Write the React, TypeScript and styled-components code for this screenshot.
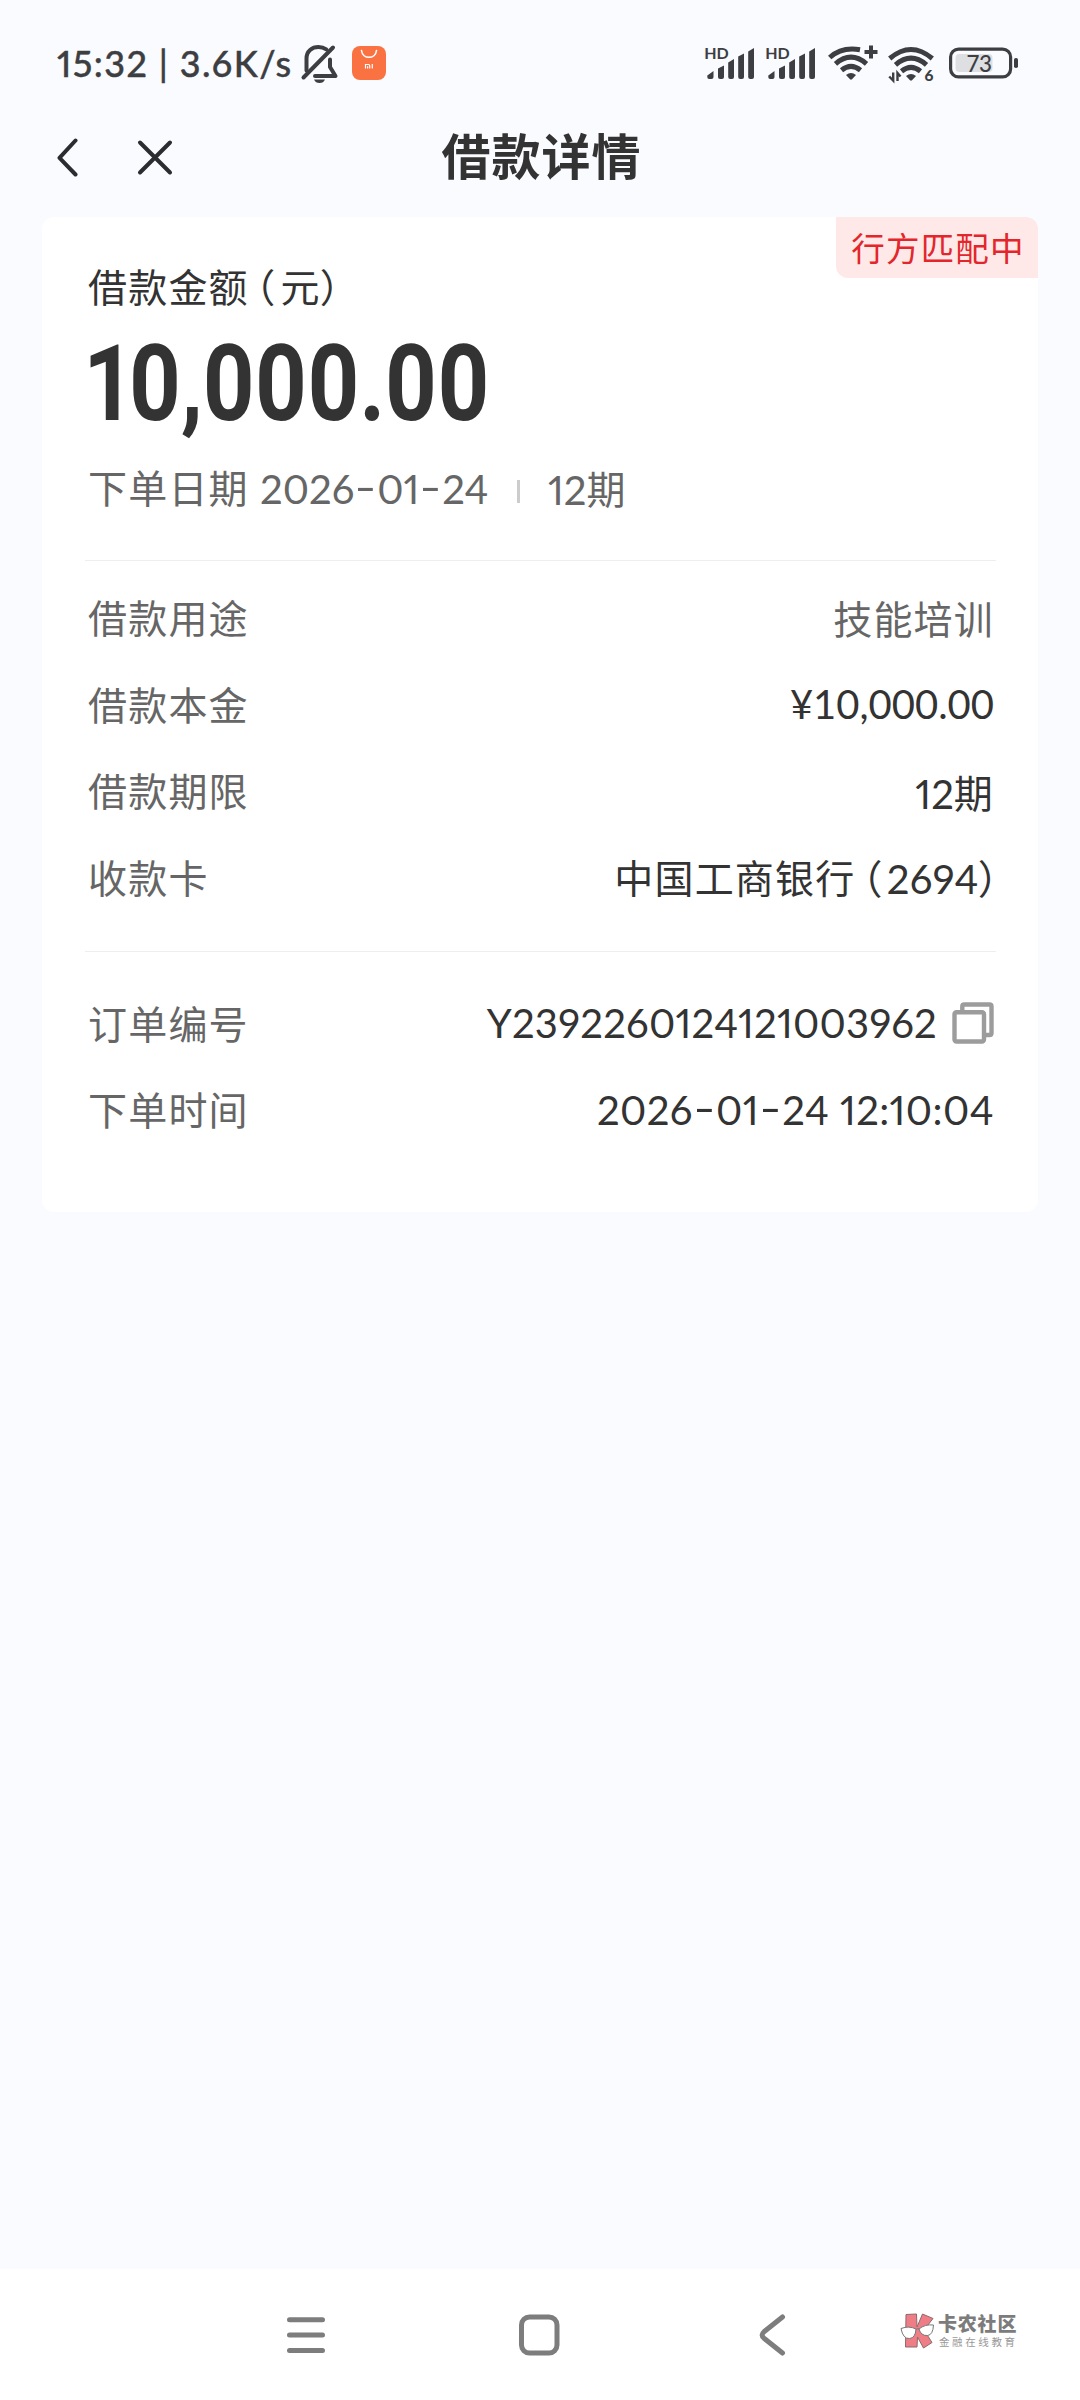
import { FC, Fragment, ReactNode } from 'react';

import styled, { createGlobalStyle } from 'styled-components';

interface DetailRow {
  label: string;
  value: ReactNode;
  muted?: boolean;
  tabular?: boolean;
  spacing?: number;
  copyable?: boolean;
}

const App: FC = () => (
  <Screen>
    <GlobalStyle />
    <StatusBar>
      <StatusGroup>
        <StatusText>15:32 | 3.6K/s</StatusText>
        <MutedBellIcon />
        <StoreIcon />
      </StatusGroup>
      <StatusGroup>
        <SignalIcon />
        <SignalIcon />
        <WifiPlusIcon />
        <WifiSixIcon />
        <BatteryIcon />
      </StatusGroup>
    </StatusBar>

    <Header>
      <HeaderActions>
        <IconButton aria-label="返回">
          <svg width="24" height="40" viewBox="0 0 24 40">
            <path d="M19.500 3.500 3.500 20.800 19.500 37.500" />
          </svg>
        </IconButton>
        <IconButton aria-label="关闭">
          <svg width="38" height="38" viewBox="0 0 38 38">
            <path d="M4 4.500 34 34.500M34 4.500 4 34.500" />
          </svg>
        </IconButton>
      </HeaderActions>
      <Title>借款详情</Title>
    </Header>

    <Card>
      <StatusTag>行方匹配中</StatusTag>
      <AmountLabel>
        借款金额<ParenLeft>（</ParenLeft>元<ParenRight>）</ParenRight>
      </AmountLabel>
      <Amount>10,000.00</Amount>
      <Summary>
        <SummaryLabel>下单日期</SummaryLabel>
        <SummaryDate>
          <DateText text="2026-01-24" />
        </SummaryDate>
        <Separator />
        <span>
          12<Cjk>期</Cjk>
        </span>
      </Summary>

      <Section $top={13}>
        {loanRows.map((row) => (
          <Detail key={row.label} row={row} />
        ))}
      </Section>
      <Section $top={28}>
        {orderRows.map((row) => (
          <Detail key={row.label} row={row} />
        ))}
      </Section>
    </Card>

    <NavBar>
      <NavButton aria-label="菜单">
        <svg width="48" height="48" viewBox="0 0 48 48">
          <path d="M7.500 8.700h33M7.500 24h33M7.500 39.500h33" />
        </svg>
      </NavButton>
      <NavButton aria-label="主页">
        <svg width="48" height="48" viewBox="0 0 48 48">
          <rect x="6.500" y="6" width="35.500" height="36" rx="8" />
        </svg>
      </NavButton>
      <NavButton aria-label="返回">
        <svg width="48" height="48" viewBox="0 0 48 48">
          <path d="M34.500 6 16 20.800q-3.800 3.200 0 6.400L34.500 42" />
        </svg>
      </NavButton>
      <Watermark>
        <WatermarkLogo />
        <WatermarkText>
          <WatermarkName>卡农社区</WatermarkName>
          <WatermarkSlogan>金融在线教育</WatermarkSlogan>
        </WatermarkText>
      </Watermark>
    </NavBar>
  </Screen>
);

export default App;

const Detail: FC<{ row: DetailRow }> = ({ row }) => (
  <Row>
    <Label>{row.label}</Label>
    <ValueGroup>
      <Value $muted={row.muted} $tabular={row.tabular} $spacing={row.spacing}>
        {row.value}
      </Value>
      {row.copyable && <CopyIcon />}
    </ValueGroup>
  </Row>
);

// Dates use wide dashes centred on the figures
const DateText: FC<{ text: string }> = ({ text }) => (
  <>
    {text.split('-').map((part, index) => (
      <Fragment key={index}>
        {index > 0 && <Dash>-</Dash>}
        {part}
      </Fragment>
    ))}
  </>
);

const MutedBellIcon: FC = () => (
  <BellSvg width="38" height="40" viewBox="0 0 38 40">
    <path d="M5.500 26.500V14.500C5.500 7 11 3 17.500 3c3 0 5.500.8 7.800 2.400" />
    <path d="M2.500 33.500 32 3.500" />
    <path d="M29 15.500v7.500l5.500 9H14" />
    <path d="M13 35.500h11q-1.500 3.500-5.500 3.500t-5.500-3.500z" fill="#3d3e42" stroke="none" />
  </BellSvg>
);

const StoreIcon: FC = () => (
  <StoreBadge width="34" height="34" viewBox="0 0 34 34">
    <rect width="34" height="34" rx="8" fill="#fb7242" />
    <path d="M9.500 4.500c1 9 14 9 15 0" fill="none" stroke="#fff" strokeWidth="1.600" strokeLinecap="round" />
    <path
      d="M13.500 22.500v-4h3q1.200 0 1.200 1.200v2.800M15.600 20.200v2.300M20.300 18v4.500"
      fill="none"
      stroke="#fff"
      strokeWidth="1.200"
    />
  </StoreBadge>
);

const SignalIcon: FC = () => (
  <SignalSvg width="50" height="34" viewBox="0 0 50 34">
    <text x="-.8" y="13" fontSize="16" fontWeight="700" fontFamily="Lato, sans-serif">
      HD
    </text>
    <path d="M2.300 29.500 8.500 25v6q0 2-2 2h-2.400q-1.800 0-1.800-2z" />
    <path d="M13 22.500 19 19.500V31q0 2-2 2h-2q-2 0-2-2z" />
    <path d="M23.200 16.500 29 13V31q0 2-2 2h-1.800q-2 0-2-2z" />
    <path d="M33.200 10.500 39 7.500V31q0 2-2 2h-1.800q-2 0-2-2z" />
    <path d="M43.200 5.500 49 2V31q0 2-2 2h-1.800q-2 0-2-2z" />
  </SignalSvg>
);

const WifiArcs: FC<{ outer: string }> = ({ outer }) => (
  <>
    <g fill="none" stroke="#3d3e42" strokeWidth="5">
      <path d={outer} />
      <path d="M7.500 18.800Q23 5.500 38.500 18.800" />
      <path d="M13.500 25.300Q23 17.500 32.500 25.300" />
    </g>
    <path d="M18 30q5-4 10 0l-4 4.300q-1 .9-2 0z" />
  </>
);

const WifiPlusIcon: FC = () => (
  <WifiPlusSvg width="50" height="36" viewBox="0 0 50 36">
    <WifiArcs outer="M1.700 12.500Q14 1.500 32 4.800" />
    <path d="M36.500 7h13M43 .5v13" fill="none" stroke="#3d3e42" strokeWidth="4" />
  </WifiPlusSvg>
);

const WifiSixIcon: FC = () => (
  <WifiSixSvg width="48" height="36" viewBox="0 0 48 36">
    <WifiArcs outer="M1.700 12.500Q23-5.500 44.300 12.500" />
    <path d="M5.200 26.500v8l-4-4M9.500 35v-8l3 3.500" fill="none" stroke="#3d3e42" strokeWidth="2.400" />
    <text x="36.500" y="34.500" fontSize="15.500" fontWeight="900" fontFamily="Lato, sans-serif">
      6
    </text>
  </WifiSixSvg>
);

const BatteryIcon: FC = () => (
  <BatterySvg width="70" height="32" viewBox="0 0 70 32">
    <rect x="1.600" y="2.100" width="60" height="27.800" rx="8" fill="none" stroke="#3d3e42" strokeWidth="3.200" />
    <rect x="6.500" y="7" width="37" height="18" rx="4" fill="#dedfe2" />
    <rect x="65" y="11" width="4" height="10" rx="1.800" />
    <text x="18" y="24.500" fontSize="22.500" fontWeight="500" fontFamily="Lato, sans-serif">
      73
    </text>
  </BatterySvg>
);

const CopyIcon: FC = () => (
  <CopySvg width="42" height="42" viewBox="0 0 42 42">
    <path d="M10.300 9V4.500q0-2 2-2H37.500q2 0 2 2V31q0 2-2 2H34" />
    <rect x="2.500" y="10.200" width="29.500" height="29.300" rx="2" />
  </CopySvg>
);

const WatermarkLogo: FC = () => (
  <svg width="36" height="36" viewBox="0 0 36 36">
    <path
      d="M6 1.500 16.500 1l.5 13L22.500 1 33 5.500 24 17l8 12.500-8.500 5.500-6-11-.5 10H5.500z"
      fill="#ef7d86"
      stroke="#8c6a6c"
      strokeWidth="1"
    />
    <path
      d="M1 15.500q8-3 15 .5-.5 9-6.500 9.500Q3 26 1 15.500zM19 16q6-5 14.500-4-.5 10-6 10.500Q21 23 19 16z"
      fill="#fff"
      stroke="#777"
    />
    <path d="M16 16.500q1.500-1.500 3-.5" fill="none" stroke="#777" />
  </svg>
);

const GlobalStyle = createGlobalStyle`
  body {
    margin: 0;
    background: #fafbff;
  }
`;

const Screen = styled.div`
  display: flex;
  flex-direction: column;
  box-sizing: border-box;
  width: 1080px;
  height: 2400px;
  overflow: hidden;
  background: #fafbff;
  color: #333;
  font-family: 'Lato', 'Noto Sans CJK SC', sans-serif;
  font-size: 40px;
  font-variant-numeric: proportional-nums;
`;

const StatusBar = styled.div`
  display: flex;
  justify-content: space-between;
  align-items: flex-start;
  height: 115px;
  padding: 0 61px 0 55px;
`;

const StatusGroup = styled.div`
  display: flex;
  align-items: flex-start;

  svg {
    flex: none;
    overflow: visible;
    fill: #3d3e42;
  }
`;

const StatusText = styled.span`
  box-sizing: border-box;
  width: 246px;
  margin-top: 39px;
  padding-left: 2px;
  color: #3d3e42;
  font-size: 36px;
  font-weight: 500;
  letter-spacing: 1.4px;
  line-height: 48px;
  white-space: pre;
  -webkit-text-stroke: 0.4px #3d3e42;
`;

const BellSvg = styled.svg`
  margin-top: 44px;

  && {
    fill: none;
  }

  stroke: #3d3e42;
  stroke-width: 4;
  stroke-linecap: round;
  stroke-linejoin: round;
`;

const StoreBadge = styled.svg`
  margin: 46px 0 0 13px;
`;

const SignalSvg = styled.svg`
  margin: 46px 10.5px 0 0;
`;

const WifiPlusSvg = styled.svg`
  margin: 45px 10px 0 2px;
`;

const WifiSixSvg = styled.svg`
  margin: 46px 13px 0 0;
`;

const BatterySvg = styled.svg`
  margin-top: 47px;
`;

const Header = styled.header`
  display: grid;
  grid-template-columns: 1fr auto 1fr;
  align-items: center;
  height: 84px;
  margin-bottom: 18px;
  padding: 0 56px;
`;

const HeaderActions = styled.div`
  display: flex;
  align-items: center;
  gap: 56px;
`;

const IconButton = styled.button`
  display: flex;
  padding: 0;
  border: none;
  background: none;

  svg {
    fill: none;
    stroke: #2b2c30;
    stroke-width: 4;
    stroke-linecap: round;
    stroke-linejoin: round;
  }
`;

const Title = styled.h1`
  margin: 0 0 6px 3px;
  font-family: 'Noto Sans CJK SC', sans-serif;
  font-size: 49px;
  font-weight: 700;
  letter-spacing: 1px;
  line-height: 60px;
`;

const Card = styled.main`
  position: relative;
  box-sizing: border-box;
  height: 995px;
  margin: 0 42px;
  padding: 43px 42px 0 43px;
  border-radius: 12px;
  background: #fff;
`;

const StatusTag = styled.div`
  position: absolute;
  top: 0;
  right: 0;
  box-sizing: border-box;
  width: 202px;
  height: 60.5px;
  padding-left: 2px;
  border-radius: 0 12px 0 12px;
  background: #ffe8e8;
  color: #e3262b;
  font-family: 'Noto Sans CJK SC', sans-serif;
  font-size: 33.5px;
  letter-spacing: 1.2px;
  line-height: 60px;
  text-align: center;
`;

/* Chinese glyphs run slightly smaller and looser than the figures */
const Cjk = styled.span`
  font-size: 39px;
  letter-spacing: 1.2px;
  vertical-align: 1px;
`;

const ParenLeft = styled.span`
  margin: 0 4px 0 7px;
  font-feature-settings: 'halt';
`;

const ParenRight = styled.span`
  margin: 0 -4px 0 -1px;
  font-feature-settings: 'halt';
`;

const Dash = styled.span`
  display: inline-block;
  margin: 0 4px;
  transform: translateY(-2px) scaleX(1.5);
`;

const AmountLabel = styled.div`
  padding-left: 3px;
  font-size: 39px;
  letter-spacing: 1.2px;
  line-height: 54px;
`;

/* Squeezed to get the narrow figures of the amount */
const Amount = styled.div`
  width: max-content;
  margin: 5px 0 0 1px;
  font-family: 'Roboto', sans-serif;
  font-size: 106px;
  font-weight: 700;
  letter-spacing: -1.2px;
  line-height: 130px;
  transform: scaleX(0.85);
  transform-origin: left;
`;

const Summary = styled.div`
  display: flex;
  align-items: center;
  height: 60px;
  margin-top: 10px;
  padding: 0 0 41px 3px;
  color: #666;
  line-height: 60px;
`;

const SummaryLabel = styled.span`
  width: 172px;
  margin-top: -2px;
  font-size: 39px;
  letter-spacing: 1.2px;
`;

const SummaryDate = styled.span`
  width: 257px;
`;

const Separator = styled.i`
  width: 3px;
  height: 23px;
  margin: 4px 28px 0 0;
  background: #ccc;
`;

const Section = styled.section<{ $top: number }>`
  padding: ${({ $top }) => $top}px 2px 30px 3px;
  border-top: 1px solid #eee;
`;

const Row = styled.div`
  display: flex;
  justify-content: space-between;
  align-items: center;
  height: 86.7px;
`;

const Label = styled.span`
  margin-top: -3px;
  color: #666;
  font-size: 39px;
  letter-spacing: 1.2px;
`;

const ValueGroup = styled.div`
  display: flex;
  align-items: center;
  gap: 15px;
`;

const Value = styled.span<{
  $muted?: boolean;
  $tabular?: boolean;
  $spacing?: number;
}>`
  color: ${({ $muted }) => ($muted ? '#666' : '#333')};
  font-variant-numeric: ${({ $tabular }) =>
    $tabular ? 'tabular-nums' : 'proportional-nums'};
  letter-spacing: ${({ $spacing = 0 }) => $spacing}px;
  white-space: nowrap;
`;

const CopySvg = styled.svg`
  fill: none;
  stroke: #9c9c9c;
  stroke-width: 4.4;
`;

const NavBar = styled.nav`
  display: flex;
  align-items: center;
  height: 131px;
  margin-top: auto;
  padding-left: 282px;
  background: #fff;
`;

const NavButton = styled.button`
  display: flex;
  margin-right: 185px;
  padding: 0;
  border: none;
  background: none;

  svg {
    fill: none;
    stroke: #7d7d7d;
    stroke-width: 5;
    stroke-linecap: round;
  }

  &:nth-child(3) {
    margin-right: 104px;
  }
`;

const Watermark = styled.div`
  display: flex;
  align-items: center;
  gap: 2px;
  margin-top: -8px;
`;

const WatermarkText = styled.div`
  display: flex;
  flex-direction: column;
  font-family: 'Noto Sans CJK SC', sans-serif;
`;

const WatermarkName = styled.strong`
  color: #7c7c7c;
  font-size: 19px;
  font-weight: 900;
  letter-spacing: 0.8px;
  line-height: 22px;
`;

const WatermarkSlogan = styled.span`
  padding-left: 1px;
  color: #999;
  font-size: 10.5px;
  letter-spacing: 2.6px;
  line-height: 15px;
`;

const loanRows: DetailRow[] = [
  { label: '借款用途', value: <Cjk>技能培训</Cjk>, muted: true },
  { label: '借款本金', value: '¥10,000.00', tabular: true },
  {
    label: '借款期限',
    value: (
      <>
        12<Cjk>期</Cjk>
      </>
    ),
  },
  {
    label: '收款卡',
    value: (
      <>
        <Cjk>中国工商银行</Cjk>
        <ParenLeft>（</ParenLeft>2694<ParenRight>）</ParenRight>
      </>
    ),
    spacing: 0.3,
  },
];

const orderRows: DetailRow[] = [
  {
    label: '订单编号',
    value: 'Y2392260124121003962',
    spacing: 0.25,
    copyable: true,
  },
  {
    label: '下单时间',
    value: <DateText text="2026-01-24 12:10:04" />,
    spacing: 0.4,
  },
];
